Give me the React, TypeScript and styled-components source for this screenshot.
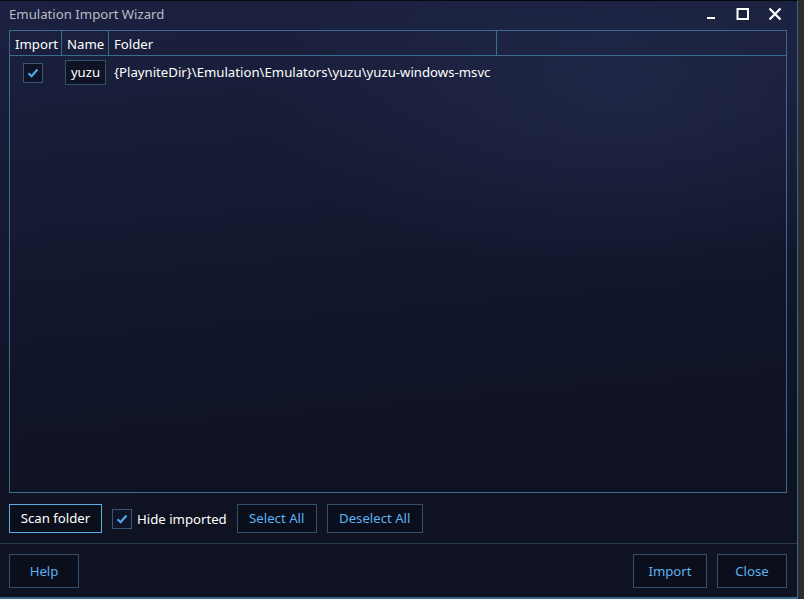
import React from "react";
import styled, { createGlobalStyle } from "styled-components";

const Global = createGlobalStyle`
  html, body { margin: 0; padding: 0; background: #2b2d31; }
  body { font-family: "Noto Sans", "Open Sans", sans-serif; font-size: 13.2px; }
  * { box-sizing: border-box; }
`;

const Window = styled.div`
  width: 798px;
  height: 599px;
  display: flex;
  flex-direction: column;
  border-top: 1px solid #05070c;
  border-right: 1px solid #3a6788;
  border-bottom: 2px solid #3a6788;
  background:
    radial-gradient(ellipse 520px 260px at 620px 90px, rgba(40, 50, 88, 0.45), transparent 70%),
    linear-gradient(175deg, #1b2140 0%, #171c35 25%, #11152a 55%, #0f1221 80%, #0f1220 100%);
  color: #ffffff;
`;

const TitleBar = styled.div`
  height: 30px;
  display: flex;
  align-items: center;
  padding: 0 13px 0 9px;
`;

const Title = styled.div`
  flex: 1;
  color: #b9bcc6;
  font-size: 13.2px;
  margin-top: -3px;
`;

const Controls = styled.div`
  display: flex;
  align-items: center;
  gap: 14px;
`;

const CtrlBtn = styled.div`
  width: 18px;
  height: 18px;
  display: flex;
  align-items: center;
  justify-content: center;
  margin-top: -4px;
`;

const Body = styled.div`
  flex: 1;
  display: flex;
  flex-direction: column;
  padding: 0 10px 0 9px;
`;

const Grid = styled.div`
  height: 463px;
  border: 1px solid #3b6c90;
  display: flex;
  flex-direction: column;
`;

const HeaderRow = styled.div`
  display: grid;
  grid-template-columns: 52px 47px 388px 1fr;
  height: 25px;
  border-bottom: 1px solid #3b6c90;
`;

const HeaderCell = styled.div<{ $last?: boolean }>`
  display: flex;
  align-items: center;
  padding-left: 5px;
  padding-top: 1px;
  border-right: ${(p) => (p.$last ? "none" : "1px solid #3b6c90")};
  color: #ffffff;
  white-space: nowrap;
  overflow: hidden;
`;

const DataRow = styled.div`
  display: grid;
  grid-template-columns: 52px 47px 388px 1fr;
  height: 32px;
  align-items: center;
`;

const CheckCell = styled.div`
  display: flex;
  padding-left: 13px;
  padding-top: 1px;
`;

const Check = styled.div`
  width: 20px;
  height: 20px;
  border: 1px solid #3b5676;
  background: #0e1325;
  display: flex;
  align-items: center;
  justify-content: center;
`;

const NameBox = styled.div`
  margin-left: 3px;
  width: 41px;
  height: 25px;
  border: 1px solid #34506e;
  background: #0f1323;
  display: flex;
  align-items: center;
  justify-content: center;
  color: #ffffff;
`;

const FolderText = styled.div`
  padding-left: 5px;
  color: #ffffff;
  white-space: nowrap;
`;

const ActionRow = styled.div`
  display: flex;
  align-items: center;
  height: 50px;
  gap: 10px;
  padding-top: 1px;
`;

const Button = styled.button<{ $focused?: boolean; $w: number }>`
  width: ${(p) => p.$w}px;
  height: 29px;
  background: #0b0f1c;
  border: 1px solid ${(p) => (p.$focused ? "#5eaee0" : "#33506d")};
  color: ${(p) => (p.$focused ? "#ffffff" : "#5cb2f2")};
  font-family: "Noto Sans", "Open Sans", sans-serif;
  font-size: 13.2px;
  padding: 0 0 1px 0;
  display: flex;
  align-items: center;
  justify-content: center;
`;

const BigButton = styled(Button)`
  height: 34px;
`;

const CheckLabel = styled.label`
  display: flex;
  align-items: center;
  gap: 5px;
  color: #ffffff;
`;

const Divider = styled.div`
  height: 1px;
  background: #28384f;
  margin: 0 -10px 0 -9px;
`;

const Footer = styled.div`
  display: flex;
  align-items: center;
  justify-content: space-between;
  height: 53px;
  padding-top: 1px;
`;

const FooterRight = styled.div`
  display: flex;
  gap: 10px;
`;

const Tick = () => (
  <svg width="12" height="10" viewBox="0 0 12 10">
    <path d="M1.5 5.2 L4.6 8.2 L10.5 1.6" fill="none" stroke="#4fa9ec" strokeWidth="2.2" />
  </svg>
);

export default function App() {
  return (
    <>
      <Global />
      <Window>
        <TitleBar>
          <Title>Emulation Import Wizard</Title>
          <Controls>
            <CtrlBtn>
              <svg width="12" height="12" viewBox="0 0 12 12">
                <rect x="2" y="9" width="8" height="2" fill="#ffffff" />
              </svg>
            </CtrlBtn>
            <CtrlBtn>
              <svg width="14" height="14" viewBox="0 0 14 14">
                <rect x="1.5" y="2" width="10.5" height="10" fill="none" stroke="#ffffff" strokeWidth="2" />
              </svg>
            </CtrlBtn>
            <CtrlBtn>
              <svg width="14" height="14" viewBox="0 0 14 14">
                <path d="M1.5 1.5 L12.5 12.5 M12.5 1.5 L1.5 12.5" stroke="#ffffff" strokeWidth="2.2" />
              </svg>
            </CtrlBtn>
          </Controls>
        </TitleBar>
        <Body>
          <Grid>
            <HeaderRow>
              <HeaderCell>Import</HeaderCell>
              <HeaderCell>Name</HeaderCell>
              <HeaderCell>Folder</HeaderCell>
              <HeaderCell $last />
            </HeaderRow>
            <DataRow>
              <CheckCell>
                <Check>
                  <Tick />
                </Check>
              </CheckCell>
              <div>
                <NameBox>yuzu</NameBox>
              </div>
              <FolderText>{"{PlayniteDir}\\Emulation\\Emulators\\yuzu\\yuzu-windows-msvc"}</FolderText>
              <div />
            </DataRow>
          </Grid>
          <ActionRow>
            <Button $focused $w={93}>Scan folder</Button>
            <CheckLabel>
              <Check>
                <Tick />
              </Check>
              Hide imported
            </CheckLabel>
            <Button $w={80}>Select All</Button>
            <Button $w={96}>Deselect All</Button>
          </ActionRow>
          <Divider />
          <Footer>
            <BigButton $w={70}>Help</BigButton>
            <FooterRight>
              <BigButton $w={74}>Import</BigButton>
              <BigButton $w={70}>Close</BigButton>
            </FooterRight>
          </Footer>
        </Body>
      </Window>
    </>
  );
}
